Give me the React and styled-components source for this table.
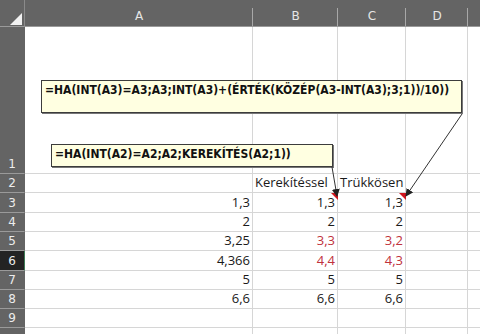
import React from "react";
import styled, { createGlobalStyle } from "styled-components";

const Global = createGlobalStyle`
  html, body { margin: 0; padding: 0; background: #fff; }
  body { width: 480px; height: 334px; overflow: hidden; }
`;

const COLS = [
  { key: "A", w: 228 },
  { key: "B", w: 85 },
  { key: "C", w: 68 },
  { key: "D", w: 62 },
  { key: "E", w: 40 },
];

const ROWS = [
  { n: 1, h: 147, cells: {} },
  { n: 2, h: 19, cells: { B: { t: "Kerekítéssel", left: true }, C: { t: "Trükkösen", left: true } } },
  { n: 3, h: 20, cells: { A: { t: "1,3" }, B: { t: "1,3", note: true }, C: { t: "1,3", note: true } } },
  { n: 4, h: 19, cells: { A: { t: "2" }, B: { t: "2" }, C: { t: "2" } } },
  { n: 5, h: 19, cells: { A: { t: "3,25" }, B: { t: "3,3", red: true }, C: { t: "3,2", red: true } } },
  { n: 6, h: 20, sel: true, cells: { A: { t: "4,366" }, B: { t: "4,4", red: true }, C: { t: "4,3", red: true } } },
  { n: 7, h: 19, cells: { A: { t: "5" }, B: { t: "5" }, C: { t: "5" } } },
  { n: 8, h: 19, cells: { A: { t: "6,6" }, B: { t: "6,6" }, C: { t: "6,6" } } },
  { n: 9, h: 19, cells: {} },
  { n: 10, h: 19, hideNum: true, cells: {} },
];

const Sheet = styled.div`
  position: relative;
  width: 480px;
  height: 334px;
  overflow: hidden;
  background: #fff;
  font-family: "Open Sans", "Noto Sans", sans-serif;
`;

const HeaderRow = styled.div`
  display: flex;
  height: 27px;
  background: #646464;
`;

const Corner = styled.div`
  position: relative;
  width: 25px;
  flex: none;
  border-right: 1px solid #8a8a8a;
  border-bottom: 1px solid #9a9a9a;
  box-sizing: border-box;
`;

const CornerTri = styled.div`
  position: absolute;
  left: 10px;
  top: 13px;
  width: 0;
  height: 0;
  border-left: 12px solid transparent;
  border-bottom: 12px solid #f2f2f2;
`;

const ColHead = styled.div`
  width: ${(p) => p.$w}px;
  flex: none;
  box-sizing: border-box;
  display: flex;
  align-items: center;
  justify-content: center;
  padding-top: 6px;
  color: #e6e6e6;
  font-family: "DejaVu Sans", sans-serif;
  font-size: 12px;
  position: relative;
  border-bottom: 1px solid #9a9a9a;
  &::after {
    content: "";
    position: absolute;
    right: 0;
    top: 8px;
    bottom: 0;
    width: 1px;
    background: #a8a8a8;
  }
`;

const Row = styled.div`
  display: flex;
  height: ${(p) => p.$h}px;
`;

const RowHead = styled.div`
  width: 25px;
  flex: none;
  box-sizing: border-box;
  background: ${(p) => (p.$sel ? "#232323" : "#646464")};
  border-bottom: 1px solid #9a9a9a;
  border-right: 1px solid ${(p) => (p.$sel ? "#3d7a55" : "#646464")};
  color: #ececec;
  font-family: "DejaVu Sans", sans-serif;
  font-size: 12px;
  display: flex;
  align-items: flex-end;
  justify-content: center;
  padding-bottom: 2px;
`;

const Cell = styled.div`
  position: relative;
  width: ${(p) => p.$w}px;
  flex: none;
  box-sizing: border-box;
  border-right: 1px solid #d6d6d6;
  border-bottom: 1px solid #d6d6d6;
  display: flex;
  align-items: flex-end;
  justify-content: ${(p) => (p.$left ? "flex-start" : "flex-end")};
  padding: 0 2px 1px 2px;
  font-size: 13px;
  line-height: 17px;
  color: ${(p) => (p.$red ? "#c0323c" : "#1a1a1a")};
  white-space: nowrap;
`;

const NoteMark = styled.div`
  position: absolute;
  right: -1px;
  top: 0;
  width: 0;
  height: 0;
  border-left: 7px solid transparent;
  border-top: 7px solid #d0141e;
`;

const Comment = styled.div`
  position: absolute;
  left: ${(p) => p.$x}px;
  top: ${(p) => p.$y}px;
  width: ${(p) => p.$w}px;
  height: ${(p) => p.$h}px;
  box-sizing: border-box;
  background: #ffffe1;
  border: 1px solid #3c3c3c;
  box-shadow: 1px 1px 0 #777;
  padding: 2px 0 0 3px;
  font-family: "DejaVu Sans Condensed", "DejaVu Sans", sans-serif;
  font-stretch: condensed;
  font-weight: bold;
  font-size: 12px;
  color: #111;
  white-space: nowrap;
`;

const Arrows = styled.svg`
  position: absolute;
  left: 0;
  top: 0;
  pointer-events: none;
`;

export default function App() {
  return (
    <>
      <Global />
      <Sheet>
        <HeaderRow>
          <Corner>
            <CornerTri />
          </Corner>
          {COLS.map((c) => (
            <ColHead key={c.key} $w={c.w}>
              {c.key === "E" ? "" : c.key}
            </ColHead>
          ))}
        </HeaderRow>
        {ROWS.map((r) => (
          <Row key={r.n} $h={r.h}>
            <RowHead $sel={r.sel}>{r.hideNum ? "" : r.n}</RowHead>
            {COLS.map((c) => {
              const cell = r.cells[c.key];
              return (
                <Cell key={c.key} $w={c.w} $left={cell && cell.left} $red={cell && cell.red}>
                  {cell ? cell.t : ""}
                  {cell && cell.note ? <NoteMark /> : null}
                </Cell>
              );
            })}
          </Row>
        ))}
        <Comment $x={41} $y={80} $w={421} $h={33}>
          =HA(INT(A3)=A3;A3;INT(A3)+(ÉRTÉK(KÖZÉP(A3-INT(A3);3;1))/10))
        </Comment>
        <Comment $x={51} $y={144} $w={282} $h={23}>
          =HA(INT(A2)=A2;A2;KEREKÍTÉS(A2;1))
        </Comment>
        <Arrows width="480" height="334" viewBox="0 0 480 334">
          <defs>
            <marker id="ah" markerWidth="8" markerHeight="8" refX="7" refY="4" orient="auto" markerUnits="userSpaceOnUse">
              <path d="M0,0 L8,4 L0,8 Z" fill="#222" />
            </marker>
          </defs>
          <line x1="332" y1="167" x2="337" y2="196" stroke="#333" strokeWidth="1" markerEnd="url(#ah)" />
          <line x1="462" y1="114" x2="406" y2="196" stroke="#333" strokeWidth="1" markerEnd="url(#ah)" />
        </Arrows>
      </Sheet>
    </>
  );
}
